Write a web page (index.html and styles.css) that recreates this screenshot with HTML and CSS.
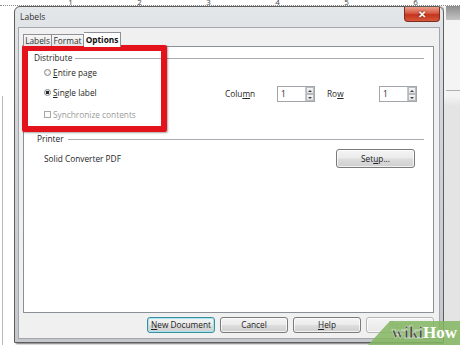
FILE: index.html
```html
<!DOCTYPE html>
<html>
<head>
<meta charset="utf-8">
<link rel="stylesheet" href="styles.css">
</head>
<body>
<div class="screen">
  <div class="ruler"><span>1</span><span>2</span><span>3</span><span>4</span><span>5</span><span>6</span></div>
  <div class="main">
    <div class="leftpage"><div class="pageline"></div></div>
    <div class="window">
      <div class="titlebar">
        <span class="title">Labels</span>
        <div class="close">✕</div>
      </div>
      <div class="wbody">
        <div class="tabs">
          <div class="tab t1">Labels</div>
          <div class="tab t2">Format</div>
          <div class="tab sel">Options</div>
        </div>
        <div class="panel">
          <div class="hdr"><span>Distribute</span><i class="rule"></i></div>
          <div class="distrow">
            <div class="opts">
              <div class="opt o1"><span class="radio"></span><span><u>E</u>ntire page</span></div>
              <div class="opt o2"><span class="radio on"></span><span><u>S</u>ingle label</span></div>
              <div class="opt o3 dis"><span class="check"></span><span>Synchronize contents</span></div>
            </div>
            <div class="spins">
              <span class="slabel">Colu<u>m</u>n</span>
              <div class="spin"><span class="val">1</span><div class="arrows"><span class="up"></span><span class="dn"></span></div></div>
              <span class="slabel rowl">Ro<u>w</u></span>
              <div class="spin"><span class="val">1</span><div class="arrows"><span class="up"></span><span class="dn"></span></div></div>
            </div>
          </div>
          <div class="hdr printer"><span>Printer</span><i class="rule"></i></div>
          <div class="prow">
            <span class="pname">Solid Converter PDF</span>
            <div class="btn setup">Set<u>u</u>p...</div>
          </div>
        </div>
        <div class="buttons">
          <div class="btn focus"><u>N</u>ew Document</div>
          <div class="btn">Cancel</div>
          <div class="btn"><u>H</u>elp</div>
          <div class="btn disabled">Reset</div>
        </div>
      </div>
    </div>
    <div class="rightpage"><div class="rtop"></div><div class="rline"></div></div>
  </div>
  <div class="highlight"></div>
  <div class="wikihow"><span class="wiki">wiki</span><span class="how">How</span></div>
</div>
</body>
</html>
```
FILE: styles.css
```css
* { box-sizing: border-box; }
body {
  margin: 0;
  width: 460px;
  height: 345px;
  overflow: hidden;
  background: #fff;
  font-family: "Open Sans", "Noto Sans", sans-serif;
  font-size: 8.3px;
  color: #262626;
}
u { text-decoration: underline; text-underline-offset: 1px; }
.screen {
  position: relative;
  width: 460px;
  height: 345px;
  display: flex;
  flex-direction: column;
}
.ruler {
  height: 6px;
  flex: none;
  display: flex;
  padding-left: 36px;
  background: #fff;
  border-bottom: 1px dotted #8a8a8a;
  overflow: hidden;
}
.ruler span {
  width: 69px;
  text-align: center;
  font-size: 8px;
  line-height: 8px;
  margin-top: -2px;
  color: #444;
}
.main {
  flex: 1;
  display: flex;
}
.leftpage {
  width: 14px;
  flex: none;
  background: #fff;
  padding: 90px 0 0 2px;
}
.pageline {
  width: 1px;
  height: 100%;
  background: #b8b8b8;
}
.window {
  width: 430px;
  flex: none;
  height: 337px;
  display: flex;
  flex-direction: column;
  border: 1px solid #5e5e5e;
  border-radius: 6px 6px 0 0;
  background: linear-gradient(#e4e7ea, #d2d6db 30%, #c4c8cd);
  padding: 0 3px 3px;
  box-shadow: 2px 1px 2px rgba(0,0,0,.55);
}
.titlebar {
  height: 20px;
  flex: none;
  display: flex;
  align-items: flex-start;
}
.title {
  margin: 4px 0 0 2px;
  line-height: 12px;
  font-size: 8.5px;
  color: #333;
}
.close {
  margin-left: auto;
  width: 36px;
  height: 15px;
  background: linear-gradient(#eba08c, #d65842 45%, #c3331c 55%, #d8583c);
  border: 1px solid #7d2e22;
  border-top: none;
  border-radius: 0 0 4px 4px;
  color: #fff;
  font-weight: bold;
  font-size: 10px;
  line-height: 14px;
  text-align: center;
  text-shadow: 0 0 2px #5a1a10;
}
.wbody {
  flex: 1;
  display: flex;
  flex-direction: column;
  background: #f0f0f0;
  padding: 4px 5px 5px 4px;
  border: 1px solid #a3a7ab;
}
.tabs {
  flex: none;
  height: 14px;
  display: flex;
  align-items: flex-end;
  position: relative;
  z-index: 1;
}
.tab {
  height: 12px;
  line-height: 11px;
  border: 1px solid #8e9297;
  border-bottom: none;
  background: linear-gradient(#f7f7f7, #e5e5e5);
  text-align: center;
  color: #333;
}
.t1 { width: 29px; }
.t2 { width: 32px; border-left: none; }
.sel {
  width: 37px;
  height: 15px;
  line-height: 14px;
  margin-bottom: -1px;
  background: #fff;
  font-weight: bold;
  color: #111;
  border-left: none;
}
.panel {
  flex: 1;
  background: #fff;
  border: 1px solid #8b8f96;
  padding: 5px 9px 0 10px;
}
.hdr {
  display: flex;
  align-items: center;
  height: 12px;
  line-height: 12px;
}
.rule {
  flex: 1;
  height: 1px;
  background: #a9acb0;
  margin-left: 3px;
}
.distrow {
  display: flex;
}
.opts {
  width: 191px;
  padding-left: 10px;
}
.opt {
  display: flex;
  align-items: center;
  height: 12px;
  gap: 2px;
}
.o1 { margin-top: 2px; }
.o2 { margin-top: 8px; }
.o3 { margin-top: 10px; }
.dis { color: #9a9a9a; }
.radio {
  width: 7px;
  height: 7px;
  border-radius: 50%;
  border: 1px solid #8a8a8a;
  background: radial-gradient(#fff, #dcdcdc);
}
.radio.on {
  background: radial-gradient(circle, #1f2a33 0 1.6px, #eaeaea 2px);
}
.check {
  width: 7px;
  height: 7px;
  border: 1px solid #a8a8a8;
  background: #fbfbfb;
}
.spins {
  display: flex;
  align-items: center;
  margin-top: 22px;
  height: 16px;
}
.slabel {
  width: 52px;
  line-height: 12px;
}
.rowl { margin-left: 12px; }
.spin {
  width: 38px;
  height: 16px;
  border: 1px solid #a2a6ab;
  display: flex;
  background: #fff;
}
.val {
  flex: 1;
  padding-left: 3px;
  line-height: 14px;
}
.arrows {
  width: 9px;
  display: flex;
  flex-direction: column;
  border-left: 1px solid #c4c7cb;
}
.arrows span {
  flex: 1;
  background: linear-gradient(#f6f6f6, #e2e2e2);
  border: 1px solid #b7babe;
  display: flex;
  align-items: center;
  justify-content: center;
}
.up::after {
  content: "";
  border-left: 2px solid transparent;
  border-right: 2px solid transparent;
  border-bottom: 2px solid #444;
}
.dn::after {
  content: "";
  border-left: 2px solid transparent;
  border-right: 2px solid transparent;
  border-top: 2px solid #444;
}
.printer {
  margin-top: 13px;
  padding-left: 3px;
}
.printer .rule { margin-left: 4px; }
.prow {
  display: flex;
  align-items: center;
  height: 19px;
  margin-top: 4px;
  padding-left: 10px;
  padding-right: 9px;
}
.pname { line-height: 12px; }
.btn {
  height: 16px;
  width: 68px;
  border: 1px solid #7a7a7a;
  border-radius: 3px;
  background: linear-gradient(#f4f4f4, #ebebeb 48%, #dddddd 52%, #cfcfcf);
  box-shadow: inset 0 0 0 1px rgba(255,255,255,.7);
  text-align: center;
  line-height: 14px;
  color: #222;
}
.setup {
  margin-left: auto;
  width: 79px;
  height: 19px;
  line-height: 17px;
}
.buttons {
  flex: none;
  display: flex;
  justify-content: flex-end;
  gap: 5px;
  margin-top: 4px;
}
.btn.focus {
  border-color: #3a8f9d;
  box-shadow: inset 0 0 0 1px #a8e4ee;
}
.btn.disabled {
  color: #b0b0b0;
  border-color: #b5b5b5;
  background: linear-gradient(#f4f4f4, #e8e8e8);
}
.rightpage {
  flex: 1;
  background: linear-gradient(#f4f4f4, #f4f4f4 90px, #e4e4e4 100px);
  padding-left: 2px;
}
.rtop {
  height: 14px;
  background: linear-gradient(#8d8d8d, #c4c4c4);
}
.rline {
  height: 1px;
  margin-top: 70px;
  background: #b0b0b0;
}
.highlight {
  position: absolute;
  left: 22px;
  top: 45px;
  width: 145px;
  height: 87px;
  border: 6px solid #e3121b;
  border-radius: 2px;
  box-shadow: 1px 1px 2px rgba(0,0,0,.35);
}
.wikihow {
  position: absolute;
  right: 0;
  bottom: 0;
  width: 92px;
  height: 24px;
  background: rgba(132, 182, 96, .85);
  clip-path: polygon(22px 0, 100% 0, 100% 100%, 0 100%);
  display: flex;
  align-items: center;
  justify-content: flex-end;
  padding-right: 3px;
  font-family: "Liberation Serif", "DejaVu Serif", serif;
  font-weight: bold;
  font-size: 17px;
  line-height: 20px;
}
.wiki { color: #3f4a3a; -webkit-text-stroke: 0.4px #fff; }
.how { color: #fff; }
```
